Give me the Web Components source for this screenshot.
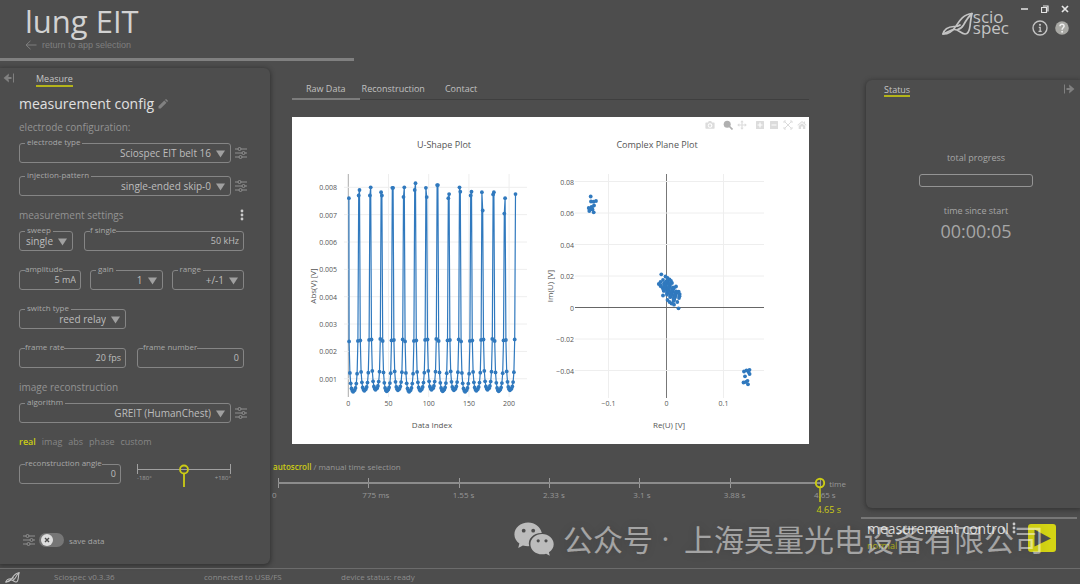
<!DOCTYPE html>
<html lang="en">
<head>
<meta charset="utf-8">
<meta name="viewport" content="width=device-width, initial-scale=1">
<title>lung EIT</title>
<style>
  :root {
    --bg: #4d4d4d;
    --line: #858585;
    --text: #bdbdbd;
    --muted: #989898;
    --accent: #cccc14;
  }
  html, body { margin: 0; }
  body { background: var(--bg); color: var(--text); font-family: "Open Sans", "Noto Sans CJK SC", sans-serif; }
</style>
</head>
<body>
<eit-app></eit-app>

<script>
const define = (name, html, setup) => {
  const template = document.createElement('template');
  template.innerHTML = `<style>
    *, *::before { box-sizing: border-box; }
    button, input, select { font-family: inherit; color: inherit; background: none; border: 0; padding: 0; margin: 0; outline: none; }
    button { display: flex; align-items: center; justify-content: center; cursor: pointer; }
    a { color: inherit; text-decoration: none; }
    h1, h2, h3, p { margin: 0; font-weight: 400; }
  </style>` + html;
  customElements.define(name, class extends HTMLElement {
    constructor() {
      super();
      this.attachShadow({ mode: 'open' });
    }
    connectedCallback() {
      if (this.shadowRoot.childNodes.length) return;
      this.shadowRoot.append(template.content.cloneNode(true));
      if (setup) setup(this, this.shadowRoot);
    }
  });
};

/* ---------- icons ---------- */
const icons = {
  back: ['0 0 12 10', '<path d="M5.5 .8 1 5l4.500 4.200M1 5h10.500" fill="none" stroke="currentColor"/>'],
  collapse: ['0 0 12 10', '<path d="M3 5h5.500" stroke="currentColor" stroke-width="2"/><path d="M5.800 .6v2.700L3.800 5l2 1.700v2.700L.6 5z" fill="currentColor"/><path d="M10.500 .5v9" stroke="currentColor"/>'],
  expand: ['0 0 12 10', '<path d="M9 5H3.500" stroke="currentColor" stroke-width="2"/><path d="M6.200 .6v2.700l2 1.700-2 1.700v2.700L11.400 5z" fill="currentColor"/><path d="M1.500 .5v9" stroke="currentColor"/>'],
  pencil: ['0 0 10 10', '<path d="M.5 9.500V7.300L6.300 1.500l2.200 2.200-5.800 5.800zM7 .9l.6-.6q.4-.4.8 0l1.300 1.300q.4.400 0 .8l-.6.600z" fill="currentColor"/>'],
  tune: ['0 0 12 12', '<g fill="none" stroke="currentColor"><path d="M0 2h3M6 2h6M0 6h7M10 6h2M0 10h4M7 10h5"/><circle cx="4.500" cy="2" r="1.500"/><circle cx="8.500" cy="6" r="1.500"/><circle cx="5.500" cy="10" r="1.500"/></g>'],
  dots: ['0 0 4 12', '<g fill="currentColor"><circle cx="2" cy="2" r="1.400"/><circle cx="2" cy="6" r="1.400"/><circle cx="2" cy="10" r="1.400"/></g>'],
  minimize: ['0 0 8 8', '<path d="M0 4h7" stroke="currentColor" stroke-width="1.500"/>'],
  restore: ['0 0 8 8', '<path d="M.5 2.500h5v5h-5zM2 1h5v5.500" fill="none" stroke="currentColor" stroke-width="1.200"/>'],
  close: ['0 0 8 8', '<path d="m1 1 6 6M7 1 1 7" stroke="currentColor" stroke-width="1.700"/>'],
  info: ['0 0 16 16', '<circle cx="8" cy="8" r="7" fill="none" stroke="currentColor" stroke-width="1.400"/><circle cx="8" cy="4.800" r="1.100" fill="currentColor"/><path d="M6.800 7.300h1.400v4M6.500 11.400h3.200" fill="none" stroke="currentColor" stroke-width="1.300"/>'],
  help: ['0 0 14 14', '<circle cx="7" cy="7" r="6.800" fill="#a8a8a4"/><path d="M5 5.200C5 2.500 9.200 2.600 9.100 5.100 9 6.700 7.100 6.800 7.100 8.700" fill="none" stroke="#eee" stroke-width="1.500"/><circle cx="7.100" cy="10.700" r="1" fill="#eee"/>'],
  logo: ['0 0 31 24', '<g fill="none" stroke="currentColor" stroke-linecap="round" stroke-linejoin="round" stroke-width="1.700"><path d="M1 22C2 17.500 6 14.800 12 14.500c3-.1 4.500-.3 6-1.500M1 22c5 .3 9-2.500 12-6.500C16.500 10.500 20 2.500 30 1.500"/><path d="M1 22c4-1 7.500-4.500 11.500-4.500 4 0 6.500 4 10.500 4.500 3.500.2 4.500-4 5-8 .6-4.500.8-8.500 2-12.500-3 2.500-6 7-8.500 11.500-1.500 2.500-3 4-5.500 4.300"/></g>'],
  play: ['0 0 28 28', '<path d="M6.500 5.500v17L23 14.500z" fill="#4d4d4d"/>'],
  camera: ['0 0 10 10', '<path fill-rule="evenodd" d="M1 2.500h2L3.800 1h2.400L7 2.500h2q.6 0 .6.600v5q0 .6-.6.600H1q-.6 0-.6-.6v-5q0-.6.600-.6zM5 3.200a2.300 2.300 0 1 0 .1 0zm0 1a1.300 1.300 0 1 1-.1 0z" fill="currentColor"/>'],
  zoom: ['0 0 10 10', '<circle cx="4.200" cy="4.200" r="3.500" fill="currentColor"/><path d="m6.500 6.500 3 3" stroke="currentColor" stroke-width="1.700"/>'],
  pan: ['0 0 10 10', '<path d="M5 .2 6.700 2.300H5.600v2.100h2.100V3.300L9.800 5 7.700 6.700V5.600H5.600v2.100h1.100L5 9.800 3.300 7.700h1.100V5.600H2.300v1.100L.2 5l2.100-1.700v1.100h2.100V2.300H3.300z" fill="currentColor"/>'],
  plus: ['0 0 10 10', '<path fill-rule="evenodd" d="M1.500 1h7q.5 0 .5.500v7q0 .5-.5.500h-7Q1 9 1 8.500v-7Q1 1 1.500 1zM4.400 2.500v1.900H2.500v1.200h1.900v1.900h1.200V5.600h1.900V4.400H5.600V2.500z" fill="currentColor"/>'],
  minus: ['0 0 10 10', '<path fill-rule="evenodd" d="M1.500 1h7q.5 0 .5.500v7q0 .5-.5.500h-7Q1 9 1 8.500v-7Q1 1 1.500 1zM2.500 4.400v1.200h5V4.400z" fill="currentColor"/>'],
  autoscale: ['0 0 10 10', '<path d="M1 3V1h2M7 1h2v2M9 7v2H7M3 9H1V7M1.500 1.500l7 7M8.500 1.500l-7 7" fill="none" stroke="currentColor"/>'],
  home: ['0 0 10 10', '<path d="M5 1 .4 5l.6.700 4-3.400 4 3.400.6-.7-1.500-1.300V1.600H6.900v1zM5 3.200 1.700 6v3h2.400V6.600h1.800V9h2.400V6z" fill="currentColor"/>'],
  wechat: ['0 0 40 34', '<path fill="#bcbcbc" d="M14.200.6C6.500.6.400 5.800.4 12.400c0 3.700 1.900 6.900 5 9.100L4.200 26l4.700-2.500c1.700.5 3.500.7 5.300.7l1-.1c-2-7 4.300-13.200 12.600-13C26.500 5 20.800.6 14.200.6z"/><path fill="#bcbcbc" d="M28.100 12c-6.500 0-11.700 4.500-11.700 10.200s5.200 10.100 11.700 10.100c1.400 0 2.800-.2 4-.6l3.700 2-.9-3.500c3-1.900 4.800-4.700 4.800-8C39.700 16.500 34.500 12 28.100 12z"/><g fill="#4d4d4d"><circle cx="9.700" cy="8.700" r="1.900"/><circle cx="19.200" cy="8.700" r="1.900"/><circle cx="24.200" cy="18.800" r="1.600"/><circle cx="32" cy="18.800" r="1.600"/></g>']
};
customElements.define('eit-icon', class extends HTMLElement {
  connectedCallback() {
    if (this.shadowRoot) return;
    const [box, body] = icons[this.getAttribute('name')];
    const [, , w, h] = box.split(' ');
    this.attachShadow({ mode: 'open' }).innerHTML =
      `<style>:host{display:block;flex:none}svg{display:block}</style>
       <svg viewBox="${box}" width="${w}" height="${h}" aria-hidden="true">${body}</svg>`;
  }
});

/* ---------- form fields ---------- */
const fieldStyle = `
  :host { display: block; flex: 1; min-width: 0; }
  .box { position: relative; height: 20px; border: 1px solid var(--line); border-radius: 3px; }
  label { position: absolute; top: -8px; font-size: 8px; line-height: 12px; color: #a8a8a8; background: var(--bg); white-space: nowrap; }
  input, select { display: block; width: 100%; height: 18px; text-align: right; }`;

define('eit-input', `<style>${fieldStyle}
    label { left: 5px; }
    input { font-size: 9px; padding: 0 4px 2px 4px; }
  </style>
  <div class="box"><input id="f" type="text"><label for="f"><slot></slot></label></div>`,
  (host, root) => { root.querySelector('input').value = host.getAttribute('value'); });

define('eit-select', `<style>${fieldStyle}
    label { left: 5px; padding: 0 2px; }
    select { appearance: none; font-size: 10px; padding: 0 19px 0 4px; text-align-last: right; }
    svg { position: absolute; right: 5px; top: 6px; pointer-events: none; }
  </style>
  <div class="box"><select id="f"></select><label for="f"><slot></slot></label>
    <svg width="9" height="8" viewBox="0 0 9 8" aria-hidden="true"><path d="M0 .5h9L4.500 7.500z" fill="#a0a0a0"/></svg></div>`,
  (host, root) => { root.querySelector('select').add(new Option(host.getAttribute('value'))); });

/* ---------- header ---------- */
define('eit-header', `<style>
    :host { display: flex; justify-content: space-between; height: 61px; }
    .left { width: 354px; border-bottom: 3px solid #808080; padding-left: 25px; }
    h1 { font-size: 31px; line-height: 38px; margin-top: 2px; height: 37px; color: #d2d2d2; }
    .back { display: flex; align-items: center; gap: 5px; font: 9px/12px "Liberation Sans", sans-serif; color: #7f7f7f; }
    .right { display: flex; gap: 23px; padding-right: 11px; }
    .brand { display: flex; color: #c4c4c4; padding-top: 11px; }
    .brand p { font-size: 17px; line-height: 11px; }
    .brand eit-icon { margin-top: 1px; }
    .tools { padding-top: 5px; display: grid; grid-template-columns: 16px 14px; column-gap: 7px; row-gap: 7px; align-content: start; justify-items: center; align-items: center; }
    .win { grid-column: 1 / -1; display: flex; gap: 12px; justify-self: end; color: #e4e4e4; }
    .tools > button { color: #c4c4c4; }
  </style>
  <div class="left">
    <h1>lung EIT</h1>
    <a class="back" href="#apps"><eit-icon name="back"></eit-icon>return to app selection</a>
  </div>
  <div class="right">
    <div class="brand"><eit-icon name="logo"></eit-icon><p>scio<br>spec</p></div>
    <div class="tools">
      <div class="win">
        <button aria-label="Minimize"><eit-icon name="minimize"></eit-icon></button>
        <button aria-label="Restore"><eit-icon name="restore"></eit-icon></button>
        <button aria-label="Close"><eit-icon name="close"></eit-icon></button>
      </div>
      <button aria-label="Info"><eit-icon name="info"></eit-icon></button>
      <button aria-label="Help"><eit-icon name="help"></eit-icon></button>
    </div>
  </div>`);

/* ---------- measure panel ---------- */
define('eit-angle-slider', `<style>
    :host { display: block; position: relative; width: 94px; color: #a0a0a0; }
    svg { display: block; width: 100%; }
    input { position: absolute; inset: 0; width: 100%; height: 12px; opacity: 0; }
    .ends { display: flex; justify-content: space-between; font-size: 6px; line-height: 8px; margin-top: -14px; }
  </style>
  <svg viewBox="0 0 94 24" aria-hidden="true">
    <path d="M.5 0v10M93.500 0v10M0 5.500h94" stroke="#a0a0a0" fill="none"/>
    <circle cx="47" cy="5.500" r="4" fill="none" stroke="#cccc14" stroke-width="1.800"/>
    <path d="M47 9v14" stroke="#cccc14" stroke-width="1.800"/>
  </svg>
  <input type="range" min="-180" max="180" value="0" aria-label="reconstruction angle">
  <div class="ends"><span>-180°</span><span>+180°</span></div>`);

define('eit-measure', `<style>
    :host { display: flex; flex-direction: column; margin: 7px 0 4px; border-radius: 0 6px 6px 0; box-shadow: 0 1px 4px 1px #333; }
    .top { display: flex; height: 20px; align-items: center; padding-left: 3px; gap: 21px; color: #808080; }
    .tab { font-size: 9px; line-height: 13px; color: #c6c6c6; border-bottom: 2px solid #b4b41a; margin-top: 3px; }
    .body { flex: 1; display: flex; flex-direction: column; gap: 11px; padding: 0 26px 15px 19px; }
    h2 { font-size: 14px; line-height: 20px; height: 31px; padding-top: 6px; color: #e0e0e0; display: flex; gap: 4px; }
    h2 button { height: 20px; color: #808080; }
    h3 { font-size: 10px; line-height: 16px; margin-bottom: 8px; color: #939393; display: flex; justify-content: space-between; align-items: center; }
    h3 button { color: #ccc; }
    .rows { display: grid; gap: 19px; }
    .rows.tight { gap: 13px; }
    .row { display: flex; gap: 11px; }
    .row.three { gap: 9px; }
    .row.tuned { gap: 4px; margin-right: -3px; }
    .tuned button { color: #909090; }
    .w54 { flex: 0 0 54px; } .w62 { flex: 0 0 62px; } .w102 { flex: 0 0 102px; } .w107 { flex: 0 0 107px; }
    .modes { display: flex; gap: 6px; font-size: 9px; line-height: 16px; margin: 10px 0 15px; color: #868686; }
    .modes button { font-size: 9px; height: 16px; }
    .modes .on { color: var(--accent); font-weight: 600; }
    .angle { gap: 16px; }
    .save { display: flex; align-items: center; gap: 4px; margin: auto 0 0 4px; height: 18px; font-size: 8px; color: #a6a6a6; }
    .save button { color: #909090; }
    input[type=checkbox] { appearance: none; width: 25px; height: 14px; border-radius: 7px; background: #767676; }
    .switch { position: relative; display: flex; align-items: center; gap: 5px; }
    .switch svg { position: absolute; left: 2px; pointer-events: none; }
  </style>
  <div class="top"><button aria-label="Collapse"><eit-icon name="collapse"></eit-icon></button><a class="tab" href="#measure">Measure</a></div>
  <div class="body">
    <section>
      <h2>measurement config <button aria-label="Rename"><eit-icon name="pencil"></eit-icon></button></h2>
      <h3>electrode configuration:</h3>
      <div class="rows tight">
        <div class="row tuned"><eit-select value="Sciospec EIT belt 16">electrode type</eit-select><button aria-label="Electrode options"><eit-icon name="tune"></eit-icon></button></div>
        <div class="row tuned"><eit-select value="single-ended skip-0">injection-pattern</eit-select><button aria-label="Injection options"><eit-icon name="tune"></eit-icon></button></div>
      </div>
    </section>
    <section>
      <h3>measurement settings <button aria-label="More settings"><eit-icon name="dots"></eit-icon></button></h3>
      <div class="rows">
        <div class="row"><eit-select class="w54" value="single">sweep</eit-select><eit-input value="50 kHz">f single</eit-input></div>
        <div class="row three"><eit-input class="w62" value="5 mA">amplitude</eit-input><eit-select value="1">gain</eit-select><eit-select value="+/-1">range</eit-select></div>
        <div class="row"><eit-select class="w107" value="reed relay">switch type</eit-select></div>
        <div class="row"><eit-input value="20 fps">frame rate</eit-input><eit-input value="0">frame number</eit-input></div>
      </div>
    </section>
    <section>
      <h3>image reconstruction</h3>
      <div class="row tuned"><eit-select value="GREIT (HumanChest)">algorithm</eit-select><button aria-label="Algorithm options"><eit-icon name="tune"></eit-icon></button></div>
      <div class="modes"><button class="on">real</button><button>imag</button><button>abs</button><button>phase</button><button>custom</button></div>
      <div class="row angle"><eit-input class="w102" value="0">reconstruction angle</eit-input><eit-angle-slider></eit-angle-slider></div>
    </section>
    <div class="save">
      <button aria-label="Save options"><eit-icon name="tune"></eit-icon></button>
      <div class="switch"><input id="save" type="checkbox"><svg width="12" height="12" viewBox="0 0 12 12" aria-hidden="true"><circle cx="6" cy="6" r="6" fill="#dedede"/><path d="m4 4 4 4M8 4 4 8" stroke="#4d4d4d" stroke-width="1.400"/></svg><label for="save">save data</label></div>
    </div>
  </div>`);

/* ---------- plots ---------- */
const BLUE = '#3079be';
const line = (x1, y1, x2, y2, c) => `<path d="M${x1} ${y1}L${x2} ${y2}" stroke="${c}"/>`;
const text = (x, y, s, size, anchor = 'middle', extra = '') =>
  `<text x="${x}" y="${y}" font-size="${size}" text-anchor="${anchor}" ${extra}>${s}</text>`;
const dots = pts => pts.map(([x, y]) => `<circle cx="${x.toFixed(1)}" cy="${y.toFixed(1)}" r="1.900"/>`).join('');

function uShape() {
  let s = '';
  [0, 50, 100, 150, 200].forEach(v => {
    const x = 56.3 + v * 0.804;
    s += line(x, 57, x, 280, v ? '#eee' : '#aaa') + text(x, 289, v, 7);
  });
  for (let i = 1; i <= 8; i++) {
    const y = 70.3 + (8 - i) * 27.35;
    s += line(52, y, 235, y, '#eee') + text(45, y + 3, '0.00' + i, 7, 'end');
  }
  const left = [null, 7.7, 7.7, 7.82, 7.98, 7.65, 7.9, 7.98, 8.08, 7.6, 8, 7.7, 7.82, 7.74, 7.04, 7.75];
  const right = [7.6, 7.9, 8, 7.7, 7.98, 8, 8.15, 7.64, 8.08, 7.75, 7.84, 7.84, 7.15, 7.82, 7.6];
  const dip = [2.4, 1.25, 0.87, 0.68, 0.6, 0.56, 0.6, 0.62, 0.7, 0.86, 1.22, 2.42];
  const pts = [];
  for (let j = 0; j < 15; j++) {
    const vals = [right[j], ...dip.map((d, k) => d + (((j * 7 + k * 5) % 5) - 2) * 0.018), left[j + 1]];
    vals.forEach((v, k) => pts.push([56.3 + (14 * j + k - (j ? 0 : -0.8) * (k ? 0 : 1)) * 0.8, 70.3 + (8 - v) * 27.35]));
  }
  s += `<path d="M${pts.map(p => p.map(n => n.toFixed(1)).join(' ')).join('L')}" fill="none" stroke="${BLUE}" stroke-width="1.200"/>`;
  s += `<g fill="${BLUE}">${dots(pts)}</g>`;
  return s + text(152, 31, 'U-Shape Plot', 9) + text(140, 311, 'Data Index', 8) +
    text(0, 0, 'Abs(V) [V]', 8, 'middle', 'transform="translate(24 169) rotate(-90)"');
}

function complexPlane() {
  let s = '';
  [[316.5, '−0.1'], [374.5, '0'], [431.5, '0.1']].forEach(([x, l]) => { s += line(x, 57, x, 281, l === '0' ? '#777' : '#eee') + text(x, 289, l, 7); });
  ['0.08', '0.06', '0.04', '0.02', '0', '−0.02', '−0.04'].forEach((l, i) => {
    const y = 64.5 + i * 31.5;
    s += line(283, y, 472, y, l === '0' ? '#666' : '#eee') + text(282, y + 3, l, 7, 'end');
  });
  const far = [[298.7, 79.5], [299, 84.5], [301.500, 84.700], [304, 84], [302, 88.500], [299.500, 90], [296.700, 91], [298, 92.500], [300.500, 92.500], [297.300, 94], [301.700, 95.300], [300, 91],
    [452, 254.500], [454.500, 253.300], [457.500, 252.800], [456.500, 255], [457.600, 257], [453, 259.300], [451.500, 265.500], [454, 265], [455.500, 263.800], [456, 267.300]];
  const blob = [[369.300, 157.300], [373.500, 159.500], [375.500, 161], [377.500, 162.500], [379, 164], [380, 166], [384, 169.500], [386.700, 174.700], [371, 163], [368.500, 165], [366.800, 167], [369, 168.500], [370.500, 171], [371, 178.500], [372, 166.500],
    [375.500, 183], [377.500, 185], [379.500, 186.500], [382, 187.700], [386.500, 191.300], [385.300, 185], [387, 181], [382, 171], [374, 166], [376, 165]];
  for (let i = 0; i < 80; i++) {
    const t = i / 79, a = ((i * 37) % 19) / 18 - 0.5;
    blob.push([371.500 + t * 13.500 + a * 6, 167 + t * 14 - a * 6 + ((i * 13) % 5) / 2 - 1]);
  }
  s += `<g fill="${BLUE}">${dots(far.concat(blob))}</g>`;
  return s + text(365, 31, 'Complex Plane Plot', 9) + text(377, 311, 'Re(U) [V]', 8) +
    text(0, 0, 'Im(U) [V]', 8, 'middle', 'transform="translate(261 169) rotate(-90)"');
}

define('eit-plots', `<style>
    :host { display: block; position: relative; background: #fff; color: #c9c9c9; }
    svg { display: block; width: 100%; fill: #555; }
    .bar { position: absolute; top: 3px; right: 2px; display: flex; gap: 4px; color: #dcdcdc; }
    .gap { margin-left: 4px; }
    .on { color: #b0b0b0; }
  </style>
  <svg viewBox="0 0 517 327" role="img" aria-label="Raw data plots">${uShape()}${complexPlane()}</svg>
  <div class="bar">
    <button aria-label="Download"><eit-icon name="camera"></eit-icon></button>
    <button class="on gap" aria-label="Zoom"><eit-icon name="zoom"></eit-icon></button>
    <button aria-label="Pan"><eit-icon name="pan"></eit-icon></button>
    <button class="gap" aria-label="Zoom in"><eit-icon name="plus"></eit-icon></button>
    <button aria-label="Zoom out"><eit-icon name="minus"></eit-icon></button>
    <button aria-label="Autoscale"><eit-icon name="autoscale"></eit-icon></button>
    <button aria-label="Reset"><eit-icon name="home"></eit-icon></button>
  </div>`);

/* ---------- timeline ---------- */
define('eit-timeline', `<style>
    :host { display: block; font-size: 8px; line-height: 12px; color: var(--muted); }
    .mode { display: flex; gap: 2px; }
    .mode button { font-size: 8px; line-height: 12px; }
    .mode .on { color: var(--accent); font-weight: 600; }
    .axis { position: relative; display: flex; margin: 5px 41px 0 5px; height: 32px; }
    .axis::before { content: ""; position: absolute; left: 0; right: 0; top: 4px; height: 2px; background: #8c8c8c; }
    .tick { flex: 1 1 0; min-width: 0; }
    .tick::before { content: ""; display: block; width: 1px; height: 10px; background: #999; }
    .tick.end { flex: 0 0 0; }
    .tick span { display: block; margin: 1px 0 0 -6px; white-space: nowrap; }
    .cursor { position: absolute; right: -6px; top: -1px; }
    .now { position: absolute; right: -21px; top: 26px; font-size: 9px; color: var(--accent); white-space: nowrap; }
    .unit { position: absolute; right: -26px; top: 0; }
    input { position: absolute; left: 0; top: 0; width: 100%; height: 10px; opacity: 0; }
  </style>
  <div class="mode"><button class="on">autoscroll</button><span>/</span><button>manual time selection</button></div>
  <div class="axis">
    <div class="tick"><span>0</span></div><div class="tick"><span>775 ms</span></div><div class="tick"><span>1.55 s</span></div>
    <div class="tick"><span>2.33 s</span></div><div class="tick"><span>3.1 s</span></div><div class="tick"><span>3.88 s</span></div><div class="tick end"><span>4.65 s</span></div>
    <svg class="cursor" width="12" height="26" viewBox="0 0 12 26" aria-hidden="true"><circle cx="6" cy="6" r="4.200" fill="none" stroke="#cccc14" stroke-width="1.900"/><path d="M6 10v15" stroke="#cccc14" stroke-width="1.400"/></svg>
    <div class="unit">time</div><div class="now">4.65 s</div>
    <input type="range" min="0" max="4650" value="4650" aria-label="time">
  </div>`);

define('eit-center', `<style>
    :host { display: block; min-width: 0; padding-top: 19px; }
    .view { margin: 0 52px 17px 22px; }
    nav { display: flex; height: 20px; border-bottom: 1px solid #3f3f3f; margin-bottom: 17px; font-size: 9px; line-height: 18px; color: #c0c0c0; }
    nav a { height: 20px; padding: 0 15px; }
    nav a.on { padding: 0 14px; border-bottom: 2px solid #7c7c7c; }
    nav a.mid { padding: 0 5px 0 2px; }
    eit-timeline { margin: 0 0 0 3px; }
  </style>
  <div class="view">
    <nav><a class="on" href="#raw">Raw Data</a><a class="mid" href="#reconstruction">Reconstruction</a><a href="#contact">Contact</a></nav>
    <eit-plots></eit-plots>
  </div>
  <eit-timeline></eit-timeline>`);

/* ---------- status and control ---------- */
define('eit-status', `<style>
    :host { display: flex; flex-direction: column; align-items: center; margin-left: 5px; border-radius: 6px 0 0 6px; box-shadow: 0 1px 4px 1px #363636; font-size: 9px; line-height: 12px; color: #a6a6a6; }
    .top { align-self: stretch; display: flex; justify-content: space-between; align-items: flex-start; padding: 4px 5px 0 18px; height: 72px; }
    .tab { color: #c6c6c6; line-height: 11px; border-bottom: 2px solid #b4b41a; }
    .top button { color: #808080; }
    .bar { width: 114px; height: 13px; border: 1px solid #949494; border-radius: 3px; margin: 10px 0 18px; }
    .time { font-size: 18px; line-height: 24px; margin-top: 2px; }
    p, .bar { margin-left: 6px; }
  </style>
  <div class="top"><a class="tab" href="#status">Status</a><button aria-label="Collapse"><eit-icon name="expand"></eit-icon></button></div>
  <p>total progress</p><div class="bar" role="progressbar" aria-label="total progress" aria-valuenow="0"></div>
  <p>time since start</p><p class="time">00:00:05</p>`);

define('eit-control', `<style>
    :host { display: flex; border-top: 2px solid #777; margin: 9px 3px 0 0; height: 51px; padding: 0 0 0 6px; }
    h2 { font-size: 14px; line-height: 20px; color: #dedede; white-space: nowrap; }
    p { font-size: 9px; line-height: 12px; color: #b4b41a; margin-top: 1px; }
    .more { height: 12px; margin: 3px 12px 0 3px; color: #ccc; }
    .play { width: 28px; height: 28px; border-radius: 3px; background: #d4d414; margin-top: 5px; }
  </style>
  <div><h2>measurement control</h2><p>normal</p></div>
  <button class="more" aria-label="More"><eit-icon name="dots"></eit-icon></button>
  <button class="play" aria-label="Start"><eit-icon name="play"></eit-icon></button>`);

define('eit-footer', `<style>
    :host { display: grid; grid-template-columns: 49px 150px 137px 1fr; align-items: center; height: 16px; padding: 1px 0 0 5px; border-top: 1px solid #6c6c6c; font-size: 8px; line-height: 14px; color: #8c8c8c; }
    .mark { width: 15px; height: 11px; color: #c4c4c4; }
  </style>
  <svg class="mark" viewBox="0 0 31 24" aria-hidden="true">${icons.logo[1].replace('1.700', '2.200')}</svg>
  <span>Sciospec v0.3.36</span><span>connected to USB/FS</span><span>device status: ready</span>`);

define('eit-watermark', `<style>
    :host { position: absolute; right: 36px; bottom: 24px; display: flex; align-items: center; height: 44px; color: rgba(255, 255, 255, .5);
      font: 30px/44px "Noto Sans CJK SC", sans-serif; white-space: nowrap; pointer-events: none; text-shadow: 0 0 10px rgba(0, 0, 0, .15); }
    eit-icon { margin: 2px 9px 0 0; }
    .dot { width: 31px; padding-right: 6px; text-align: center; font-family: "Open Sans", sans-serif; }
  </style>
  <eit-icon name="wechat"></eit-icon><span>公众号</span><span class="dot">·</span><span>上海昊量光电设备有限公司</span>`);

define('eit-app', `<style>
    :host { position: relative; display: flex; flex-direction: column; min-height: 100vh; overflow: hidden; }
    main { flex: 1; display: grid; grid-template-columns: 270px minmax(0, 1fr) 219px; }
    aside { display: flex; flex-direction: column; padding-top: 19px; min-width: 0; }
    eit-status { flex: 1; }
  </style>
  <eit-header></eit-header>
  <main>
    <eit-measure></eit-measure>
    <eit-center></eit-center>
    <aside><eit-status></eit-status><eit-control></eit-control></aside>
  </main>
  <eit-footer></eit-footer>
  <eit-watermark></eit-watermark>`);
</script>
</body>
</html>
